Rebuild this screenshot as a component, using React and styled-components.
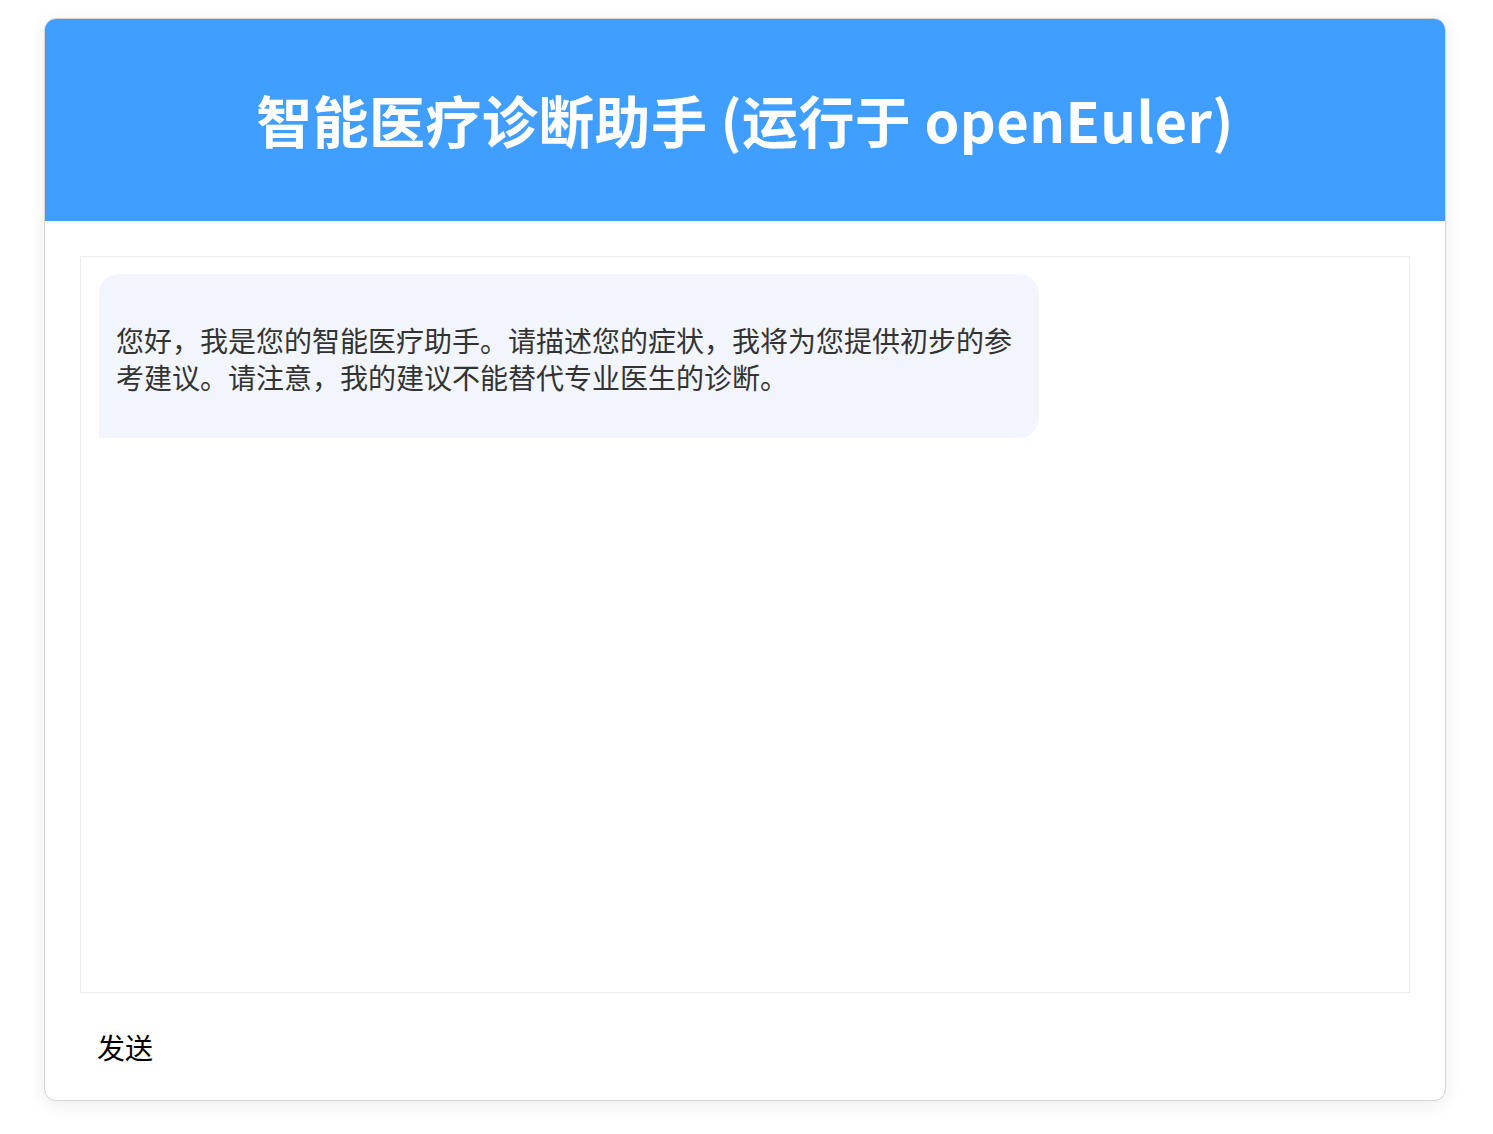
import React from "react";
import styled, { createGlobalStyle } from "styled-components";

const Global = createGlobalStyle`
  html, body { margin: 0; padding: 0; background: #ffffff; }
  body { font-family: "Noto Sans CJK SC", "Noto Sans", sans-serif; }
  * { box-sizing: border-box; }
`;

const Page = styled.div`
  padding: 18px 47px 33px 44px;
`;

const Card = styled.div`
  border: 1px solid #d6d6d6;
  border-radius: 12px;
  overflow: hidden;
  background: #ffffff;
  box-shadow: 0 4px 18px rgba(0, 0, 0, 0.08);
`;

const Header = styled.header`
  height: 202px;
  background: #409eff;
  display: flex;
  align-items: center;
  justify-content: center;
`;

const Title = styled.h1`
  margin: 0;
  color: #ffffff;
  font-family: "Noto Sans CJK SC", "Noto Sans", sans-serif;
  font-weight: 700;
  font-size: 56px;
  line-height: 1.2;
  letter-spacing: 0.4px;
  padding-bottom: 2px;
`;

const Body = styled.div`
  padding: 35px 35px 24px 35px;
  display: flex;
  flex-direction: column;
  gap: 26px;
`;

const ChatArea = styled.div`
  height: 737px;
  border: 1px solid #ececec;
  padding: 17px 18px;
  display: flex;
  flex-direction: column;
  align-items: flex-start;
  overflow-y: auto;
`;

const Bubble = styled.div`
  width: 940px;
  max-width: 100%;
  background: ${(p) => (p.$user ? "#409eff" : "#f2f5fc")};
  color: ${(p) => (p.$user ? "#fff" : "#333333")};
  border-radius: 20px 20px 20px 0;
  padding: 16px 17px;
`;

const Text = styled.p`
  margin: 32px 0 26px;
  font-size: 28px;
  line-height: 37px;
`;

const InputRow = styled.div`
  display: flex;
  align-items: center;
`;

const SendButton = styled.button`
  background: transparent;
  border: none;
  padding: 10px 17px;
  font-family: "Noto Sans CJK SC", "Noto Sans", sans-serif;
  font-size: 28px;
  line-height: 37px;
  color: #000000;
  cursor: pointer;
`;

export default function App() {
  return (
    <>
      <Global />
      <Page>
        <Card>
          <Header>
            <Title>智能医疗诊断助手 (运行于 openEuler)</Title>
          </Header>
          <Body>
            <ChatArea>
              <Bubble>
                <Text>
                  您好，我是您的智能医疗助手。请描述您的症状，我将为您提供初步的参考建议。请注意，我的建议不能替代专业医生的诊断。
                </Text>
              </Bubble>
            </ChatArea>
            <InputRow>
              <SendButton>发送</SendButton>
            </InputRow>
          </Body>
        </Card>
      </Page>
    </>
  );
}
